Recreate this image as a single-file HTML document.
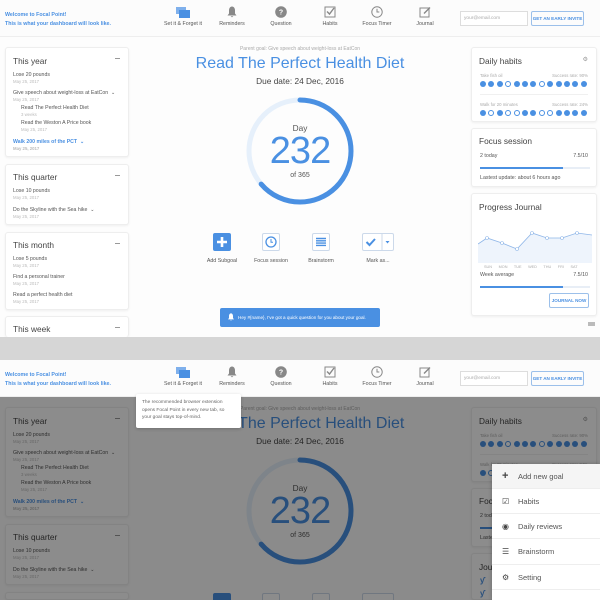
<!DOCTYPE html>
<html style="overflow:hidden;width:600px;height:600px"><head><meta charset="utf-8"><style>
*{box-sizing:border-box;margin:0;padding:0}
html,body{overflow:hidden}
body{width:600px;height:600px;overflow:hidden;background:#fff;font-family:"Liberation Sans",sans-serif;position:relative}
.dash{position:absolute;left:0;width:600px;height:337px;overflow:hidden;background:#fdfdfd}
.a{position:absolute}
.hdr{position:absolute;left:0;top:0;width:600px;height:37px;background:#fcfcfc;border-bottom:1px solid #eee}
.wel{position:absolute;left:5px;font-size:5.3px;color:#4a90e2;font-weight:bold}
.nav{position:absolute;top:6px;width:50px;text-align:center;font-size:5.3px;color:#555}
.nav svg{display:block;margin:0 auto 3px}
.email{position:absolute;left:460px;top:11px;width:68px;height:15px;border:1px solid #ddd;background:#fff;font-size:4.8px;color:#aaa;padding:4px 3px}
.inv{position:absolute;left:531px;top:11px;width:53px;height:15px;border:1px solid #9cc0ea;border-radius:2px;font-size:4.6px;color:#4a90e2;font-weight:bold;text-align:center;line-height:13px}
.card{position:absolute;background:#fff;border:1px solid #eee;border-radius:3px;box-shadow:0 1px 2px rgba(0,0,0,.06)}
.ct{position:absolute;left:7px;font-size:8.3px;color:#444}
.min{position:absolute;right:8px;top:10px;width:5px;height:1px;background:#999}
.it{position:absolute;left:7px;font-size:5.2px;color:#555}
.it i{display:block;font-style:normal;font-size:4.3px;color:#bbb;margin-top:1px}
.lbl{position:absolute;font-size:5.3px;color:#555;text-align:center;width:60px}
.btn{position:absolute;top:233px;width:18px;height:18px;border:1px solid #ccd9ea;border-radius:2px;background:#fff}
.dots{position:absolute;left:8px;display:flex;gap:2.4px}
.dots b{width:6px;height:6px;border-radius:50%;background:#4a90e2}
.dots b.o{background:#fff;border:0.8px solid #4a90e2}
.sm{position:absolute;font-size:4.3px;color:#aaa}
.tx{position:absolute;font-size:5.3px;color:#555}
.bar{position:absolute;left:8px;width:110px;height:1.5px;background:#e8eef6}
.bar div{height:100%;background:#4a90e2}
.mi{height:25px;border-bottom:1px solid #eee;line-height:25px;padding-left:26px;position:relative}
.mi span{position:absolute;left:10px;top:0;font-size:8px;color:#444}
</style></head><body>

<!-- TOP -->
<div class="dash" style="top:0">
<div class="hdr">
 <div class="wel" style="top:12px">Welcome to Focal Point!</div>
 <div class="wel" style="top:21px">This is what your dashboard will look like.</div>
 <div class="nav" style="left:158px"><svg width="14" height="12" viewBox="0 0 14 12"><rect x="0" y="1" width="10" height="7" fill="#7fb0ec"/><rect x="3" y="4" width="11" height="8" fill="#4a90e2"/></svg>Set it &amp; Forget it</div>
 <div class="nav" style="left:207px"><svg width="12" height="12" viewBox="0 0 12 12"><path d="M6 0.5C4 0.5 3 2.5 3 4.5V7.5L1.5 9.5H10.5L9 7.5V4.5C9 2.5 8 .5 6 .5ZM4.7 10.3H7.3Q6 12.2 4.7 10.3Z" fill="#888"/></svg>Reminders</div>
 <div class="nav" style="left:256px"><svg width="12" height="12" viewBox="0 0 12 12"><circle cx="6" cy="6" r="5.8" fill="#888"/><text x="6" y="8.6" font-size="7" fill="#fff" text-anchor="middle" font-family="Liberation Sans" font-weight="bold">?</text></svg>Question</div>
 <div class="nav" style="left:305px"><svg width="12" height="12" viewBox="0 0 12 12"><rect x="1" y="1" width="10" height="10" fill="none" stroke="#888" stroke-width="1"/><path d="M3 5.5L5.5 8 10 2" fill="none" stroke="#888" stroke-width="1.4"/></svg>Habits</div>
 <div class="nav" style="left:352px"><svg width="12" height="12" viewBox="0 0 12 12"><circle cx="6" cy="6" r="5.2" fill="none" stroke="#888" stroke-width="1"/><path d="M6 2.8V6H8.3" fill="none" stroke="#888" stroke-width="1"/></svg>Focus Timer</div>
 <div class="nav" style="left:400px"><svg width="12" height="12" viewBox="0 0 12 12"><rect x="1" y="2" width="9" height="9" fill="none" stroke="#888" stroke-width="1"/><path d="M5 7.5L11 1.5" stroke="#888" stroke-width="1.4"/></svg>Journal</div>
 <div class="email">your@email.com</div>
 <div class="inv">GET AN EARLY INVITE</div>
</div>

<div class="card" style="left:5px;top:47px;width:124px;height:110px">
 <div class="ct" style="top:8px">This year</div><div class="min"></div>
 <div class="it" style="top:24px">Lose 20 pounds<i>May 25, 2017</i></div>
 <div class="it" style="top:42px">Give speech about weight-loss at EatCon &nbsp;⌄<i>May 25, 2017</i></div>
 <div class="it" style="top:57px;left:15px">Read The Perfect Health Diet<i>3 weeks</i></div>
 <div class="it" style="top:72px;left:15px">Read the Weston A Price book<i>May 25, 2017</i></div>
 <div class="it" style="top:91px;color:#4a90e2;font-weight:bold">Walk 200 miles of the PCT &nbsp;⌄<i>May 25, 2017</i></div>
</div>
<div class="card" style="left:5px;top:164px;width:124px;height:61px">
 <div class="ct" style="top:7px">This quarter</div><div class="min"></div>
 <div class="it" style="top:23px">Lose 10 pounds<i>May 25, 2017</i></div>
 <div class="it" style="top:42px">Do the Skyline with the Sea hike &nbsp;⌄<i>May 25, 2017</i></div>
</div>
<div class="card" style="left:5px;top:232px;width:124px;height:78px">
 <div class="ct" style="top:7px">This month</div><div class="min"></div>
 <div class="it" style="top:23px">Lose 5 pounds<i>May 25, 2017</i></div>
 <div class="it" style="top:41px">Find a personal trainer<i>May 25, 2017</i></div>
 <div class="it" style="top:59px">Read a perfect health diet<i>May 25, 2017</i></div>
</div>
<div class="card" style="left:5px;top:316px;width:124px;height:21px;border-bottom:none">
 <div class="ct" style="top:7px">This week</div><div class="min"></div>
</div>

<div class="a" style="left:150px;width:300px;top:46px;text-align:center;font-size:5px;color:#aaa">Parent goal: Give speech about weight-loss at EatCon</div>
<div class="a" style="left:150px;width:300px;top:55px;text-align:center;font-size:16px;color:#4a90e2">Read The Perfect Health Diet</div>
<div class="a" style="left:150px;width:300px;top:76px;text-align:center;font-size:8.3px;color:#444">Due date: 24 Dec, 2016</div>
<svg class="a" style="left:245px;top:96px" width="110" height="110" viewBox="0 0 110 110"><circle cx="55" cy="55" r="51" fill="none" stroke="#e6f0fb" stroke-width="5"/><circle cx="55" cy="55" r="51" fill="none" stroke="#4a90e2" stroke-width="5" stroke-dasharray="204 400" stroke-linecap="round" transform="rotate(-90 55 55)"/></svg>
<div class="a" style="left:250px;width:100px;top:123px;text-align:center;font-size:8.3px;color:#555">Day</div>
<div class="a" style="left:240px;width:120px;top:130px;text-align:center;font-size:38px;color:#4a90e2;letter-spacing:-1px">232</div>
<div class="a" style="left:250px;width:100px;top:172px;text-align:center;font-size:7px;color:#555">of 365</div>

<div class="btn" style="left:213px;background:#4a90e2;border-color:#4a90e2"><svg width="18" height="18" viewBox="0 0 18 18" style="position:absolute;left:-1px;top:-1px"><path d="M9 4V14M4 9H14" stroke="#fff" stroke-width="2.6"/></svg></div>
<div class="btn" style="left:262px"><svg width="16" height="16" viewBox="0 0 16 16"><circle cx="8" cy="8" r="5" fill="none" stroke="#4a90e2" stroke-width="1.3"/><path d="M8 5V8.3H10" fill="none" stroke="#4a90e2" stroke-width="1"/></svg></div>
<div class="btn" style="left:312px"><svg width="16" height="16" viewBox="0 0 16 16"><path d="M3 4.5H13M3 6.8H13M3 9.1H13M3 11.4H13" stroke="#4a90e2" stroke-width="1.4"/></svg></div>
<div class="btn" style="left:362px;width:32px"><svg width="30" height="16" viewBox="0 0 30 16"><path d="M3.5 8L6.5 11 12 5" fill="none" stroke="#4a90e2" stroke-width="2"/><path d="M19 0V16" stroke="#ccd9ea" stroke-width="1"/><path d="M22.5 7H26.5L24.5 9.5Z" fill="#4a90e2"/></svg></div>
<div class="lbl" style="left:192px;top:258px">Add Subgoal</div>
<div class="lbl" style="left:241px;top:258px">Focus session</div>
<div class="lbl" style="left:291px;top:258px">Brainstorm</div>
<div class="lbl" style="left:348px;top:258px">Mark as...</div>

<div class="a" style="left:220px;top:308px;width:160px;height:19px;background:#4a90e2;border-radius:2px;color:#fff;font-size:4.6px;line-height:19px;padding-left:18px"><svg class="a" style="left:7px;top:5px" width="8" height="8" viewBox="0 0 12 12"><path d="M6 0.5C4 0.5 3 2.5 3 4.5V7.5L1.5 9.5H10.5L9 7.5V4.5C9 2.5 8 .5 6 .5ZM4.7 10.3H7.3Q6 12.2 4.7 10.3Z" fill="#fff"/></svg>Hey #{name}, I've got a quick question for you about your goal.</div>

<div class="card" style="left:471px;top:47px;width:126px;height:75px">
 <div class="ct" style="top:8px">Daily habits</div><div class="a" style="right:8px;top:8px;font-size:6px;color:#999">⚙</div>
 <div class="sm" style="left:8px;top:25px">Take fish oil</div><div class="sm" style="right:8px;top:25px">Success rate: 90%</div>
 <div class="dots" style="top:33px"><b></b><b></b><b></b><b class="o"></b><b></b><b></b><b></b><b class="o"></b><b></b><b></b><b></b><b></b><b></b></div>
 <div class="a" style="left:8px;right:8px;top:46px;height:1px;background:#f0f0f0"></div>
 <div class="sm" style="left:8px;top:54px">Walk for 20 minutes</div><div class="sm" style="right:8px;top:54px">Success rate: 24%</div>
 <div class="dots" style="top:62px"><b></b><b class="o"></b><b></b><b class="o"></b><b class="o"></b><b></b><b></b><b class="o"></b><b class="o"></b><b></b><b></b><b></b><b></b></div>
</div>
<div class="card" style="left:471px;top:128px;width:126px;height:59px">
 <div class="ct" style="top:7px">Focus session</div>
 <div class="tx" style="left:8px;top:24px">2 today</div><div class="tx" style="right:8px;top:24px">7.5/10</div>
 <div class="bar" style="top:38px"><div style="width:75%"></div></div>
 <div class="tx" style="left:8px;top:46px">Lastest update: about 6 hours ago</div>
</div>
<div class="card" style="left:471px;top:193px;width:126px;height:123px">
 <div class="ct" style="top:8px">Progress Journal</div>
 <svg class="a" style="left:6px;top:27px" width="114" height="44" viewBox="0 0 114 44"><path d="M0 23L9 17 24 22 39 28 54 12 69 17 84 17 99 12 114 14V42H0Z" fill="#eef4fc"/><path d="M0 23L9 17 24 22 39 28 54 12 69 17 84 17 99 12 114 14" fill="none" stroke="#8fb6e8" stroke-width="0.8"/><g fill="#fff" stroke="#8fb6e8" stroke-width="0.6"><circle cx="9" cy="17" r="1.5"/><circle cx="24" cy="22" r="1.5"/><circle cx="39" cy="28" r="1.5"/><circle cx="54" cy="12" r="1.5"/><circle cx="69" cy="17" r="1.5"/><circle cx="84" cy="17" r="1.5"/><circle cx="99" cy="12" r="1.5"/></g></svg>
 <div class="sm" style="left:12px;top:71px;word-spacing:5.5px;font-size:3.8px">SUN MON TUE WED THU FRI SAT</div>
 <div class="tx" style="left:8px;top:78px">Week average</div><div class="tx" style="right:8px;top:78px">7.5/10</div>
 <div class="bar" style="top:92px"><div style="width:75%"></div></div>
 <div class="a" style="left:77px;top:99px;width:40px;height:15px;border:1px solid #9cc0ea;border-radius:2px;font-size:4.6px;color:#4a90e2;font-weight:bold;text-align:center;line-height:13px">JOURNAL NOW</div>
</div>
<div class="a" style="left:588px;top:322px;width:7px;height:4px;background:#bbb"></div>
</div>

<div class="a" style="left:0;top:337px;width:600px;height:23px;background:#d6d6d6"></div>

<!-- BOTTOM -->
<div class="dash" style="top:360px;height:240px">
<div class="hdr">
 <div class="wel" style="top:12px">Welcome to Focal Point!</div>
 <div class="wel" style="top:21px">This is what your dashboard will look like.</div>
 <div class="nav" style="left:158px"><svg width="14" height="12" viewBox="0 0 14 12"><rect x="0" y="1" width="10" height="7" fill="#7fb0ec"/><rect x="3" y="4" width="11" height="8" fill="#4a90e2"/></svg>Set it &amp; Forget it</div>
 <div class="nav" style="left:207px"><svg width="12" height="12" viewBox="0 0 12 12"><path d="M6 0.5C4 0.5 3 2.5 3 4.5V7.5L1.5 9.5H10.5L9 7.5V4.5C9 2.5 8 .5 6 .5ZM4.7 10.3H7.3Q6 12.2 4.7 10.3Z" fill="#888"/></svg>Reminders</div>
 <div class="nav" style="left:256px"><svg width="12" height="12" viewBox="0 0 12 12"><circle cx="6" cy="6" r="5.8" fill="#888"/><text x="6" y="8.6" font-size="7" fill="#fff" text-anchor="middle" font-family="Liberation Sans" font-weight="bold">?</text></svg>Question</div>
 <div class="nav" style="left:305px"><svg width="12" height="12" viewBox="0 0 12 12"><rect x="1" y="1" width="10" height="10" fill="none" stroke="#888" stroke-width="1"/><path d="M3 5.5L5.5 8 10 2" fill="none" stroke="#888" stroke-width="1.4"/></svg>Habits</div>
 <div class="nav" style="left:352px"><svg width="12" height="12" viewBox="0 0 12 12"><circle cx="6" cy="6" r="5.2" fill="none" stroke="#888" stroke-width="1"/><path d="M6 2.8V6H8.3" fill="none" stroke="#888" stroke-width="1"/></svg>Focus Timer</div>
 <div class="nav" style="left:400px"><svg width="12" height="12" viewBox="0 0 12 12"><rect x="1" y="2" width="9" height="9" fill="none" stroke="#888" stroke-width="1"/><path d="M5 7.5L11 1.5" stroke="#888" stroke-width="1.4"/></svg>Journal</div>
 <div class="email">your@email.com</div>
 <div class="inv">GET AN EARLY INVITE</div>
</div>

<div class="card" style="left:5px;top:47px;width:124px;height:110px">
 <div class="ct" style="top:8px">This year</div><div class="min"></div>
 <div class="it" style="top:24px">Lose 20 pounds<i>May 25, 2017</i></div>
 <div class="it" style="top:42px">Give speech about weight-loss at EatCon &nbsp;⌄<i>May 25, 2017</i></div>
 <div class="it" style="top:57px;left:15px">Read The Perfect Health Diet<i>3 weeks</i></div>
 <div class="it" style="top:72px;left:15px">Read the Weston A Price book<i>May 25, 2017</i></div>
 <div class="it" style="top:91px;color:#4a90e2;font-weight:bold">Walk 200 miles of the PCT &nbsp;⌄<i>May 25, 2017</i></div>
</div>
<div class="card" style="left:5px;top:164px;width:124px;height:61px">
 <div class="ct" style="top:7px">This quarter</div><div class="min"></div>
 <div class="it" style="top:23px">Lose 10 pounds<i>May 25, 2017</i></div>
 <div class="it" style="top:42px">Do the Skyline with the Sea hike &nbsp;⌄<i>May 25, 2017</i></div>
</div>
<div class="card" style="left:5px;top:232px;width:124px;height:8px"></div>

<div class="a" style="left:150px;width:300px;top:46px;text-align:center;font-size:5px;color:#aaa">Parent goal: Give speech about weight-loss at EatCon</div>
<div class="a" style="left:150px;width:300px;top:55px;text-align:center;font-size:16px;color:#4a90e2">Read The Perfect Health Diet</div>
<div class="a" style="left:150px;width:300px;top:76px;text-align:center;font-size:8.3px;color:#444">Due date: 24 Dec, 2016</div>
<svg class="a" style="left:245px;top:96px" width="110" height="110" viewBox="0 0 110 110"><circle cx="55" cy="55" r="51" fill="none" stroke="#e6f0fb" stroke-width="5"/><circle cx="55" cy="55" r="51" fill="none" stroke="#4a90e2" stroke-width="5" stroke-dasharray="204 400" stroke-linecap="round" transform="rotate(-90 55 55)"/></svg>
<div class="a" style="left:250px;width:100px;top:123px;text-align:center;font-size:8.3px;color:#555">Day</div>
<div class="a" style="left:240px;width:120px;top:130px;text-align:center;font-size:38px;color:#4a90e2;letter-spacing:-1px">232</div>
<div class="a" style="left:250px;width:100px;top:172px;text-align:center;font-size:7px;color:#555">of 365</div>
<div class="btn" style="left:213px;background:#4a90e2;border-color:#4a90e2"></div>
<div class="btn" style="left:262px"></div>
<div class="btn" style="left:312px"></div>
<div class="btn" style="left:362px;width:32px"></div>

<div class="card" style="left:471px;top:47px;width:126px;height:75px">
 <div class="ct" style="top:8px">Daily habits</div><div class="a" style="right:8px;top:8px;font-size:6px;color:#999">⚙</div>
 <div class="sm" style="left:8px;top:25px">Take fish oil</div><div class="sm" style="right:8px;top:25px">Success rate: 90%</div>
 <div class="dots" style="top:33px"><b></b><b></b><b></b><b class="o"></b><b></b><b></b><b></b><b class="o"></b><b></b><b></b><b></b><b></b><b></b></div>
 <div class="a" style="left:8px;right:8px;top:46px;height:1px;background:#f0f0f0"></div>
 <div class="sm" style="left:8px;top:54px">Walk for 20 minutes</div><div class="sm" style="right:8px;top:54px">Success rate: 24%</div>
 <div class="dots" style="top:62px"><b></b><b class="o"></b><b></b><b class="o"></b><b class="o"></b><b></b><b></b><b class="o"></b><b class="o"></b><b></b><b></b><b></b><b></b></div>
</div>
<div class="card" style="left:471px;top:128px;width:126px;height:59px">
 <div class="ct" style="top:7px">Focus session</div>
 <div class="tx" style="left:8px;top:24px">2 today</div>
 <div class="bar" style="top:38px"><div style="width:75%"></div></div>
 <div class="tx" style="left:8px;top:46px">Lastest update: about 6 hours ago</div>
</div>
<div class="card" style="left:471px;top:193px;width:126px;height:47px">
 <div class="ct" style="top:8px">Journal</div>
 <div class="a" style="left:8px;top:22px;font-size:8px;color:#4a90e2;font-weight:bold">ƴ</div>
 <div class="a" style="left:8px;top:35px;font-size:8px;color:#4a90e2;font-weight:bold">ƴ</div>
</div>

<div class="a" style="left:0;top:37px;width:600px;height:203px;background:rgba(0,0,0,.45)"></div>

<div class="a" style="left:136px;top:34px;width:105px;height:34px;background:#fff;border-radius:2px;box-shadow:0 1px 3px rgba(0,0,0,.2);font-size:4.8px;color:#666;line-height:7.6px;padding:5px 6px">The recommended browser extension opens Focal Point in every new tab, so your goal stays top-of-mind.</div>

<div class="a" style="left:492px;top:104px;width:108px;height:136px;background:#fff;box-shadow:0 0 4px rgba(0,0,0,.25);font-size:7.5px;color:#555">
 <div class="mi" style="background:#f5f5f5"><span style="font-size:11px;font-weight:bold">+</span>Add new goal</div>
 <div class="mi"><span>☑</span>Habits</div>
 <div class="mi"><span>◉</span>Daily reviews</div>
 <div class="mi" style="height:26px;line-height:26px"><span>☰</span>Brainstorm</div>
 <div class="mi"><span>⚙</span>Setting</div>
</div>
</div>
</body></html>
